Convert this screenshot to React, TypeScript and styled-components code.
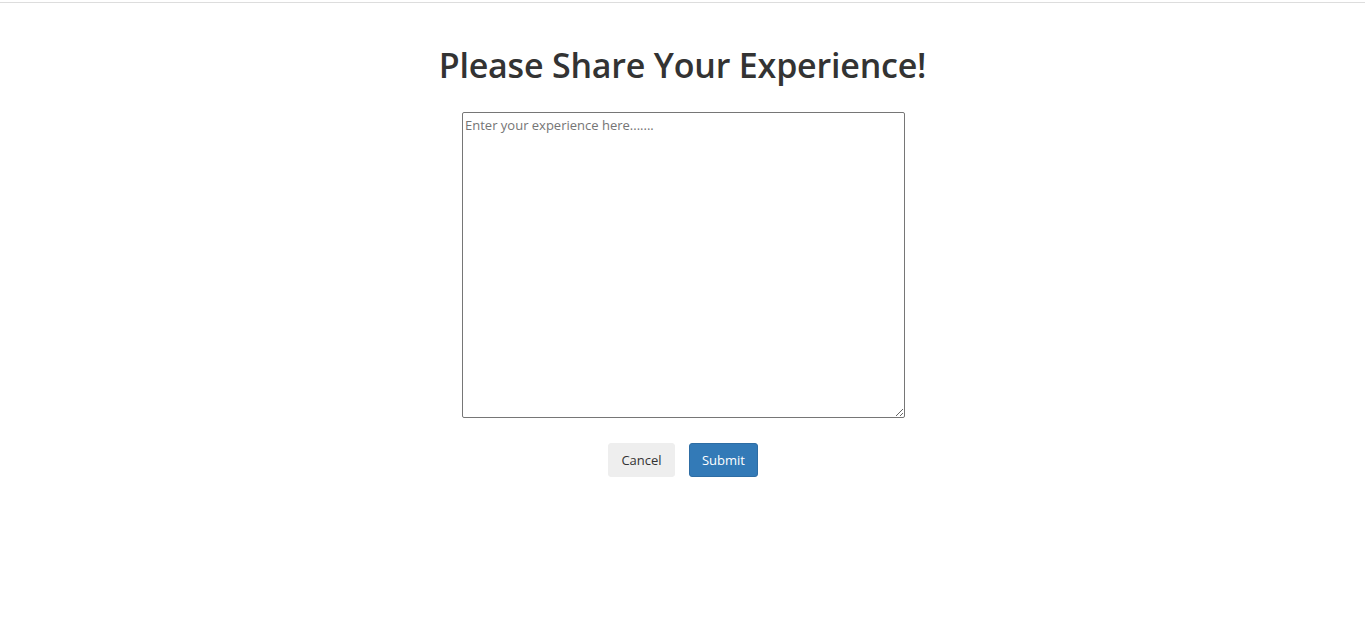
import React from "react";
import styled, { createGlobalStyle } from "styled-components";

const Global = createGlobalStyle`
  html, body { margin: 0; padding: 0; background: #fff; }
  body { font-family: "Open Sans", "Noto Sans", sans-serif; color: #333; }
`;

const TopRule = styled.div`
  height: 2px;
  border-bottom: 1px solid #ddd;
`;

const Page = styled.main`
  display: flex;
  flex-direction: column;
  align-items: center;
`;

const Title = styled.h1`
  margin: 38px 0 0;
  font-size: 34px;
  font-weight: 600;
  line-height: 48px;
  color: #333;
  letter-spacing: -0.2px;
`;

const Area = styled.textarea`
  margin: 23px 0 0 2px;
  box-sizing: border-box;
  width: 443px;
  height: 306px;
  border: 1px solid #767676;
  border-radius: 2px;
  padding: 3px 2px 2px;
  font-family: "Open Sans", "Noto Sans", sans-serif;
  font-size: 13px;
  color: #333;
  resize: both;
  &::placeholder { color: #757575; }
`;

const Actions = styled.div`
  margin: 25px 0 0 1px;
  display: flex;
  gap: 14px;
`;

const Button = styled.button<{ $primary?: boolean }>`
  height: 34px;
  min-width: ${(p) => (p.$primary ? "69px" : "67px")};
  padding: 0 12px;
  font-family: "Open Sans", "Noto Sans", sans-serif;
  font-size: 13px;
  border-radius: 3px;
  cursor: pointer;
  border: 1px solid ${(p) => (p.$primary ? "#2e6da4" : "#eee")};
  background: ${(p) => (p.$primary ? "#337ab7" : "#eee")};
  color: ${(p) => (p.$primary ? "#fff" : "#333")};
`;

export default function App() {
  return (
    <>
      <Global />
      <TopRule />
      <Page>
        <Title>Please Share Your Experience!</Title>
        <Area placeholder="Enter your experience here......." />
        <Actions>
          <Button>Cancel</Button>
          <Button $primary>Submit</Button>
        </Actions>
      </Page>
    </>
  );
}
